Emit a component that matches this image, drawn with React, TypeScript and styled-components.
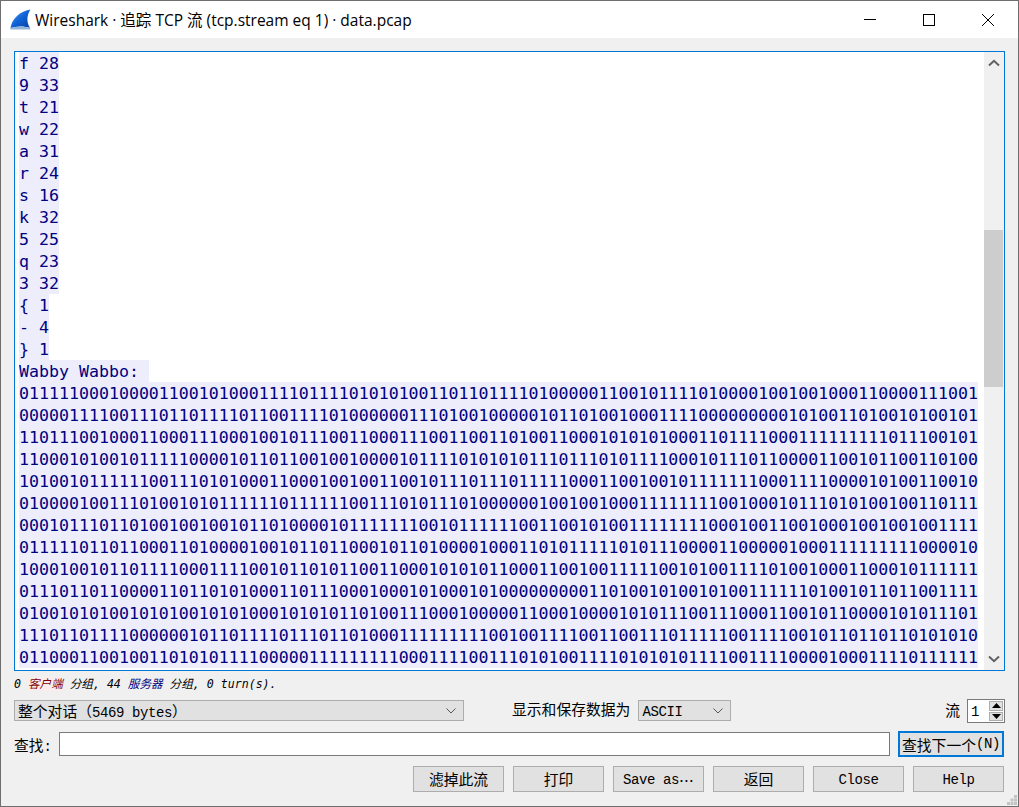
import styled, { createGlobalStyle } from "styled-components";

const counts = ["f 28", "9 33", "t 21", "w 22", "a 31", "r 24", "s 16", "k 32", "5 25", "q 23", "3 32", "{ 1", "- 4", "} 1"];

const bits = [
  "011111000100001100101000111101111010101001101101111010000011001011110100001001001000110000111001",
  "000001111001110110111101100111101000000111010010000010110100100011110000000001010011010010100101",
  "110111001000110001110001001011100110001110011001101001100010101010001101111000111111111011100101",
  "110001010010111110000101101100100100001011110101010111011101011110001011101100001100101100110100",
  "101001011111100111010100011000100100110010111011101111100011001001011111110001111000010100110010",
  "010000100111010010101111110111111001110101110100000010010010001111111100100010111010100100110111",
  "000101110110100100100101101000010111111100101111110011001010011111111000100110010001001001001111",
  "011111011011000110100001001011011000101101000010001101011111010111000011000001000111111111000010",
  "100010010110111100011110010110101100110001010101100011001001111100101001111010010001100010111111",
  "011101101100001101101010001101110001000101000101000000000110100101001010011111101001011011001111",
  "010010101001010100101010001010101101001110001000001100010000101011100111000110010110000101011101",
  "111011011110000001011011110111011010001111111110010011110011001110111110011110010110110110101010",
  "011000110010011010101111000001111111110001111001110101001111010101011110011110000100011110111111",
];

const footerButtons = [
  { label: "滤掉此流", latin: false },
  { label: "打印", latin: false },
  { label: "Save as", latin: true },
  { label: "返回", latin: false },
  { label: "Close", latin: true },
  { label: "Help", latin: true },
];

export default function App() {
  return (
    <>
      <GlobalStyle />
      <Window>
        <TitleBar>
          <FinIcon viewBox="0 0 21 21">
            <defs>
              <linearGradient id="fin" x1="0" y1="0" x2="1" y2="1">
                <stop offset="0" stopColor="#5fa8f0" />
                <stop offset="0.5" stopColor="#0f62d6" />
                <stop offset="1" stopColor="#0a3fa0" />
              </linearGradient>
            </defs>
            <path d="M0.500 19C2 10 9 2.500 20.500 0.500C17 6 16 12 20 19C14 17 7 17 0.500 19Z" fill="url(#fin)" />
            <path d="M0.500 19C7 17 14 17 20 19L20.500 20.500L0.500 20.500Z" fill="#8fb4d8" />
          </FinIcon>
          <Title>Wireshark · 追踪 TCP 流 (tcp.stream eq 1) · data.pcap</Title>
          <WindowControls>
            <ControlButton>
              <svg width="14" height="14" viewBox="0 0 14 14"><path d="M1 6.500H13" stroke="#000" fill="none" /></svg>
            </ControlButton>
            <ControlButton>
              <svg width="14" height="14" viewBox="0 0 14 14"><rect x="1.500" y="1.500" width="11" height="11" stroke="#000" fill="none" /></svg>
            </ControlButton>
            <ControlButton>
              <svg width="14" height="14" viewBox="0 0 14 14"><path d="M1 1L13 13M13 1L1 13" stroke="#000" fill="none" /></svg>
            </ControlButton>
          </WindowControls>
        </TitleBar>
        <Content>
          <StreamBox>
            <StreamText>
              {counts.map((line) => (
                <Row key={line}><Mark>{line}</Mark></Row>
              ))}
              <Row><Mark>{"Wabby Wabbo: "}</Mark></Row>
              {bits.map((line, i) => (
                <Row key={i}><Mark>{line}</Mark></Row>
              ))}
            </StreamText>
            <ScrollBar>
              <ScrollArrow>
                <svg width="12" height="8" viewBox="0 0 12 8"><path d="M1 6.500L6 1.800L11 6.500" stroke="#606060" strokeWidth="2" fill="none" /></svg>
              </ScrollArrow>
              <ScrollThumb />
              <ScrollArrowEnd>
                <svg width="12" height="8" viewBox="0 0 12 8"><path d="M1 1.500L6 6.200L11 1.500" stroke="#606060" strokeWidth="2" fill="none" /></svg>
              </ScrollArrowEnd>
            </ScrollBar>
          </StreamBox>

          <Status>
            0 <Client>客户端</Client> 分组, 44 <Server>服务器</Server> 分组, 0 turn(s).
          </Status>

          <OptionsRow>
            <Combo $width={450}>
              <span>整个对话（<Latin>5469 bytes</Latin>）</span>
              <Chevron />
            </Combo>
            <OptionLabel>显示和保存数据为</OptionLabel>
            <Combo $width={93}>
              <AsciiText><Latin>ASCII</Latin></AsciiText>
              <Chevron />
            </Combo>
            <StreamLabel>流</StreamLabel>
            <SpinBox>
              <SpinValue><Latin>1</Latin></SpinValue>
              <SpinButtons>
                <SpinButton>
                  <svg width="9" height="5" viewBox="0 0 9 5"><path d="M4.500 0L9 5H0Z" fill="#000" /></svg>
                </SpinButton>
                <SpinButton>
                  <svg width="9" height="5" viewBox="0 0 9 5"><path d="M0 0H9L4.500 5Z" fill="#000" /></svg>
                </SpinButton>
              </SpinButtons>
            </SpinBox>
          </OptionsRow>

          <FindRow>
            <FindLabel>查找<Latin>:</Latin></FindLabel>
            <FindInput />
            <FindNext>查找下一个<Latin>(N)</Latin></FindNext>
          </FindRow>

          <ButtonRow>
            {footerButtons.map(({ label, latin }) => (
              <FooterButton key={label} $latin={latin}>
                {latin ? <Latin>{label}</Latin> : label}
                {label === "Save as" && <Ellipsis>…</Ellipsis>}
              </FooterButton>
            ))}
          </ButtonRow>
        </Content>
        <Grip width="10" height="10" viewBox="0 0 10 10">
          <path d="M7 0h3v3H7zM3.500 3.500h3v3h-3zM7 3.500h3v3H7zM0 7h3v3H0zM3.500 7h3v3h-3zM7 7h3v3H7z" fill="#c4c4c4" />
        </Grip>
      </Window>
    </>
  );
}

function Chevron() {
  return (
    <ChevronIcon width="10" height="6" viewBox="0 0 10 6">
      <path d="M0.500 0.500L5 5L9.500 0.500" stroke="#555" fill="none" />
    </ChevronIcon>
  );
}

const GlobalStyle = createGlobalStyle`
  html, body {
    margin: 0;
    padding: 0;
    background: #f0f0f0;
  }
`;

const uiFont = `"Liberation Mono", "Noto Sans CJK SC", monospace`;

const Window = styled.div`
  position: relative;
  width: 1019px;
  height: 807px;
  box-sizing: border-box;
  border: 1px solid #6e6e6e;
  background: #f0f0f0;
  display: flex;
  flex-direction: column;
  overflow: hidden;
  color: #000;
  font-family: ${uiFont};
  font-size: 14.8px;
`;

const Latin = styled.span`
  font-size: 14px;
  letter-spacing: -0.4px;
`;

const TitleBar = styled.div`
  height: 37px;
  flex: none;
  background: #fff;
  display: flex;
  align-items: center;
  padding-left: 9px;
`;

const FinIcon = styled.svg`
  width: 21px;
  height: 21px;
  flex: none;
`;

const Title = styled.div`
  margin-left: 4px;
  font-family: "Open Sans", "Noto Sans CJK SC", sans-serif;
  font-size: 15.5px;
  white-space: nowrap;
`;

const WindowControls = styled.div`
  margin-left: auto;
  display: flex;
  height: 100%;
`;

const ControlButton = styled.div`
  width: 58px;
  display: flex;
  align-items: center;
  justify-content: center;
  padding-right: 1px;
`;

const Content = styled.div`
  flex: 1;
  display: flex;
  flex-direction: column;
  padding: 13px 13px 0;
  min-height: 0;
`;

const StreamBox = styled.div`
  height: 620px;
  flex: none;
  box-sizing: border-box;
  border: 1px solid #0078d7;
  background: #fff;
  display: flex;
  overflow: hidden;
`;

const StreamText = styled.div`
  flex: 1;
  padding-left: 4px;
  overflow: hidden;
  font-family: "DejaVu Sans Mono", monospace;
  font-size: 16.6px;
  color: #000080;
`;

const Row = styled.div`
  height: 22px;
  display: flex;
  white-space: pre;
`;

const Mark = styled.span`
  height: 22px;
  line-height: 24px;
  overflow: hidden;
  background: #ededfb;
`;

const ScrollBar = styled.div`
  width: 20px;
  flex: none;
  background: #f0f0f0;
  display: flex;
  flex-direction: column;
`;

const ScrollArrow = styled.div`
  height: 22px;
  display: flex;
  align-items: center;
  justify-content: center;
  padding-right: 1px;
`;

const ScrollArrowEnd = styled(ScrollArrow)`
  margin-top: auto;
`;

const ScrollThumb = styled.div`
  margin-top: 156px;
  width: 19px;
  height: 157px;
  background: #cdcdcd;
`;

const Status = styled.div`
  margin-top: 6px;
  height: 14px;
  line-height: 14px;
  font-family: "DejaVu Sans Mono", "Noto Sans CJK SC", monospace;
  font-size: 11.6px;
  font-style: italic;
  white-space: pre-wrap;
`;

const Client = styled.span`
  color: #7f0000;
  background: #fbeded;
`;

const Server = styled.span`
  color: #000080;
`;

const OptionsRow = styled.div`
  margin-top: 8px;
  height: 24px;
  display: flex;
  align-items: flex-start;
`;

const Combo = styled.div<{ $width: number }>`
  width: ${(p) => p.$width}px;
  height: 21px;
  margin-top: 1px;
  flex: none;
  box-sizing: border-box;
  border: 1px solid #adadad;
  background: #e1e1e1;
  display: flex;
  align-items: center;
  justify-content: space-between;
  padding: 0 7px 0 3px;
  white-space: nowrap;
`;

const AsciiText = styled.span`
  padding-top: 2px;
`;

const ChevronIcon = styled.svg`
  flex: none;
`;

const OptionLabel = styled.div`
  margin-left: 48px;
  margin-right: 8px;
  line-height: 24px;
  white-space: nowrap;
`;

const StreamLabel = styled.div`
  margin-left: auto;
  margin-right: 7px;
  line-height: 26px;
`;

const SpinBox = styled.div`
  width: 38px;
  height: 24px;
  box-sizing: border-box;
  border: 1px solid #7a7a7a;
  background: #fff;
  display: flex;
  justify-content: space-between;
  padding: 1px;
`;

const SpinValue = styled.div`
  padding-left: 2px;
  line-height: 23px;
`;

const SpinButtons = styled.div`
  width: 14px;
  display: flex;
  flex-direction: column;
  gap: 1px;
`;

const SpinButton = styled.div`
  flex: 1;
  border: 1px solid #adadad;
  background: #e1e1e1;
  display: flex;
  align-items: center;
  justify-content: center;
`;

const FindRow = styled.div`
  margin-top: 8px;
  height: 26px;
  display: flex;
  align-items: center;
`;

const FindLabel = styled.div`
  width: 45px;
  flex: none;
  white-space: nowrap;
`;

const FindInput = styled.div`
  flex: 1;
  height: 24px;
  box-sizing: border-box;
  border: 1px solid #7a7a7a;
  background: #fff;
`;

const FindNext = styled.div`
  width: 106px;
  height: 26px;
  margin-left: 8px;
  margin-right: 1px;
  flex: none;
  box-sizing: border-box;
  border: 2px solid #0078d7;
  background: #e1e1e1;
  display: flex;
  align-items: center;
  justify-content: center;
  white-space: nowrap;
`;

const ButtonRow = styled.div`
  margin-top: 9px;
  margin-right: 1px;
  display: flex;
  justify-content: flex-end;
  gap: 9px;
`;

const FooterButton = styled.div<{ $latin: boolean }>`
  width: 91px;
  height: 26px;
  box-sizing: border-box;
  border: 1px solid #adadad;
  background: #e1e1e1;
  display: flex;
  align-items: center;
  justify-content: center;
  white-space: pre;
  padding: ${(p) => (p.$latin ? "2px 0 0" : "0 0 1px")};
`;

const Ellipsis = styled.span`
  font-family: "Noto Sans CJK SC", sans-serif;
`;

const Grip = styled.svg`
  position: absolute;
  right: 1px;
  bottom: 1px;
`;
